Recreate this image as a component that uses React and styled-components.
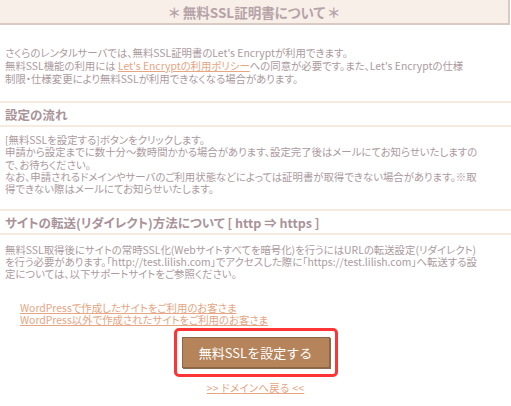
import React from "react";
import styled, { createGlobalStyle } from "styled-components";

const GlobalStyle = createGlobalStyle`
  body {
    margin: 0;
    background: #ffffff;
    font-family: "Noto Sans CJK JP", "Noto Sans", sans-serif;
    font-feature-settings: "palt";
  }
`;

const Page = styled.div`
  width: 511px;
  color: #ab9a9e;
`;

const TitleBar = styled.div`
  width: 508px;
  height: 23px;
  background: #f8efe8;
  border-right: 2px solid #d9cbc1;
  border-bottom: 2px solid #d9cbc1;
  display: flex;
  align-items: center;
  justify-content: center;
  font-size: 13.5px;
  font-weight: bold;
  color: #b6a3a8;
`;

const Text = styled.p`
  margin: ${(p) => p.$top || 0}px 0 0;
  padding: 0 5px;
  font-size: 10.4px;
  line-height: ${(p) => p.$lh || 12.5}px;
  white-space: nowrap;
`;

const Heading = styled.h3`
  margin: ${(p) => p.$top || 0}px 0 0;
  padding: 2px 5px 1px;
  border-top: 2px solid #f6ebe1;
  border-bottom: 2px solid #f6ebe1;
  font-size: 12.5px;
  line-height: 19px;
  font-weight: bold;
  color: #a99399;
`;

const Link = styled.a`
  color: #e6a583;
  text-decoration: underline;
  cursor: pointer;
`;

const LinkList = styled.div`
  margin-top: 22px;
  padding-left: 20px;
  display: flex;
  flex-direction: column;
  font-size: 10.4px;
  line-height: 12px;
`;

const Center = styled.div`
  display: flex;
  flex-direction: column;
  align-items: center;
`;

const Highlight = styled.div`
  margin-top: 2px;
  padding: 6px 5px 6px 5px;
  border: 3px solid #ff3434;
  border-radius: 5px;
`;

const SetButton = styled.button`
  display: block;
  width: 148px;
  height: 31px;
  background: #b5845b;
  color: #ffffff;
  border: 1px solid #8f6443;
  box-shadow: 1px 1px 0 #8a6a52;
  font-family: inherit;
  font-size: 13px;
  cursor: pointer;
`;

const BackLink = styled(Link)`
  margin-top: 5px;
  font-size: 10.4px;
  line-height: 12px;
  letter-spacing: 0.3px;
`;

export default function App() {
  return (
    <Page>
      <GlobalStyle />
      <TitleBar>＊ 無料SSL証明書について ＊</TitleBar>

      <Text $top={21} $lh={13}>
        さくらのレンタルサーバでは、無料SSL証明書のLet's Encryptが利用できます。
        <br />
        無料SSL機能の利用には <Link>Let's Encryptの利用ポリシー</Link>への同意が必要です。また、Let's Encryptの仕様
        <br />
        制限・仕様変更により無料SSLが利用できなくなる場合があります。
      </Text>

      <Heading $top={16}>設定の流れ</Heading>
      <Text $top={7} $lh={12.3}>
        [無料SSLを設定する]ボタンをクリックします。
        <br />
        申請から設定までに数十分～数時間かかる場合があります、設定完了後はメールにてお知らせいたしますの
        <br />
        で、お待ちください。
        <br />
        なお、申請されるドメインやサーバのご利用状態などによっては証明書が取得できない場合があります。※取
        <br />
        得できない際はメールにてお知らせいたします。
      </Text>

      <Heading $top={14}>サイトの転送(リダイレクト)方法について [ http ⇒ https ]</Heading>
      <Text $top={9} $lh={12}>
        無料SSL取得後にサイトの常時SSL化(Webサイトすべてを暗号化)を行うにはURLの転送設定(リダイレクト)
        <br />
        を行う必要があります。「http://test.lilish.com」でアクセスした際に「https://test.lilish.com」へ転送する設
        <br />
        定については、以下サポートサイトをご参照ください。
      </Text>

      <LinkList>
        <Link>WordPressで作成したサイトをご利用のお客さま</Link>
        <Link>WordPress以外で作成されたサイトをご利用のお客さま</Link>
      </LinkList>

      <Center>
        <Highlight>
          <SetButton>無料SSLを設定する</SetButton>
        </Highlight>
        <BackLink>&gt;&gt; ドメインへ戻る &lt;&lt;</BackLink>
      </Center>
    </Page>
  );
}
